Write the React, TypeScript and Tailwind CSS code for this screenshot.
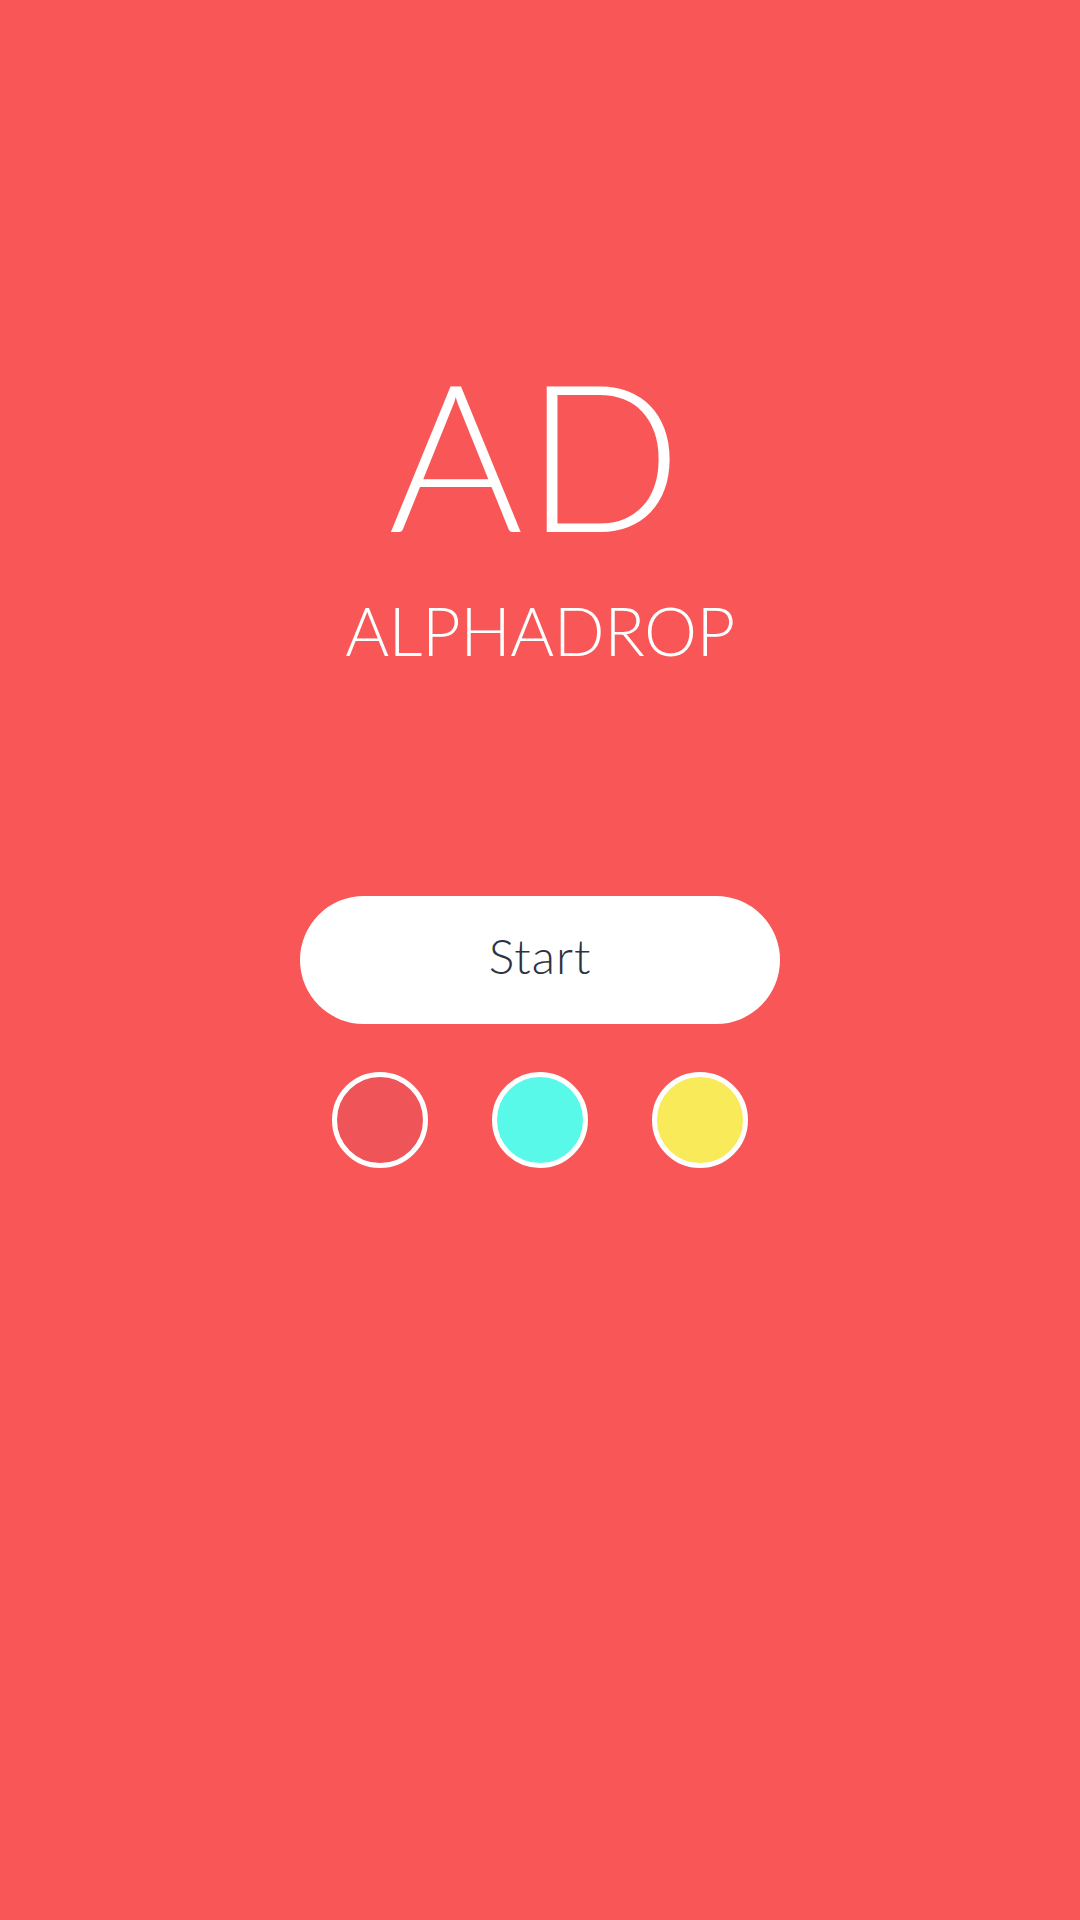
export default function App() {
  const swatches = ["bg-[#ef5558]", "bg-[#58f9e8]", "bg-[#f9ea5a]"];
  return (
    <div className="min-h-[1920px] w-full bg-[#f95757] flex flex-col items-center pt-[350px] font-['Lato',sans-serif]">
      <h1 className="text-[206px] leading-none font-light text-white tracking-[2px] pr-[8px]">AD</h1>
      <p className="mt-[41px] text-[67px] leading-none font-light text-white tracking-[-0.5px]">
        ALPHADROP
      </p>
      <button className="mt-[232px] w-[480px] h-[128px] rounded-full bg-white text-[48px] leading-none font-light text-[#2d3340] pb-[8px] tracking-[1px]">
        Start
      </button>
      <div className="mt-[48px] flex gap-[64px]">
        {swatches.map((c) => (
          <div key={c} className={`w-[96px] h-[96px] rounded-full border-[5px] border-white ${c}`} />
        ))}
      </div>
    </div>
  );
}
